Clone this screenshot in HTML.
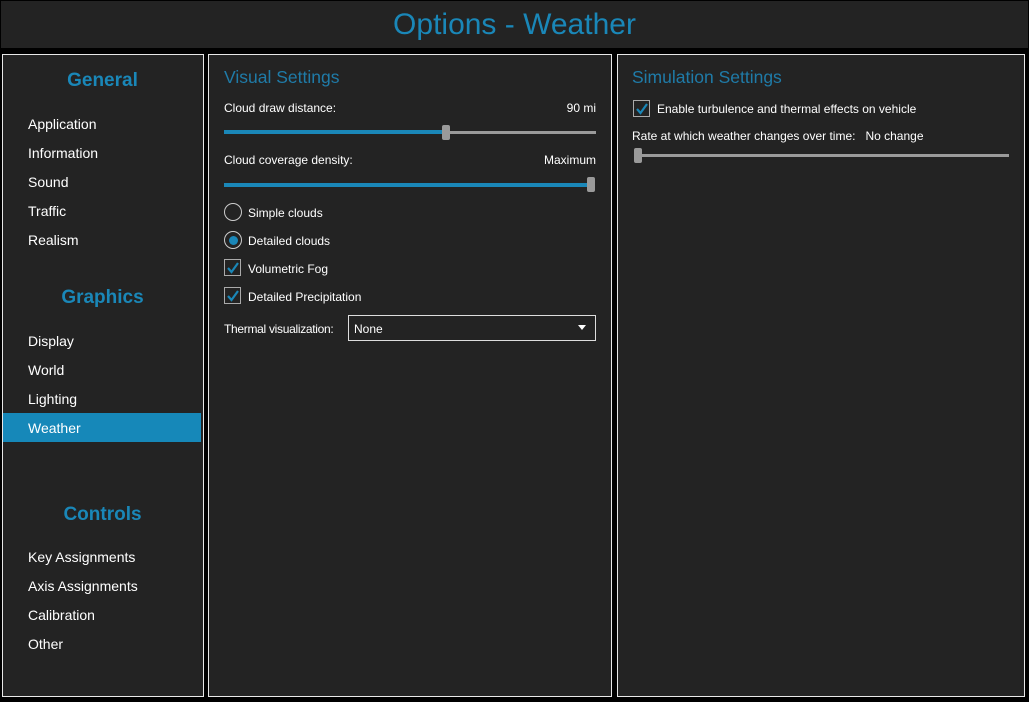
<!DOCTYPE html>
<html><head><meta charset="utf-8"><style>
*{margin:0;padding:0;box-sizing:border-box}
body{width:1029px;height:702px;background:#000;position:relative;overflow:hidden;font-family:"Segoe UI","Liberation Sans",sans-serif;color:#fff}
.a{position:absolute}
.top{left:0;top:0;width:1029px;height:49px;background:#232323;border:1px solid #000}
.title{left:0;top:8px;width:1029px;text-align:center;font-size:30px;color:#1a87b8}
.p{background:#232323;border:1px solid #e8e8e8}
.h{font-size:19px;font-weight:bold;color:#1a87b8;text-align:center;width:201px;left:2px}
.it{left:28px;font-size:14px}
.sh{font-size:17.5px;color:#1f7ba8}
.t{font-size:12px}
.track{height:3px;background:#9a9a9a}
.fill{height:4px;background:#1a87b8}
.thumb{width:8px;height:15px;background:#9a9a9a;border-radius:2px}
.cb{width:17px;height:17px;border:1px solid #aaa}
.rb{width:18px;height:18px;border:1.5px solid #ccc;border-radius:50%}
</style></head><body>
<div class="a top"></div>
<div class="a title">Options - Weather</div>

<div class="a p" style="left:2px;top:54px;width:202px;height:643px"></div>
<div class="a h" style="top:70px">General</div>
<div class="a it" style="top:116px">Application</div>
<div class="a it" style="top:145px">Information</div>
<div class="a it" style="top:174px">Sound</div>
<div class="a it" style="top:203px">Traffic</div>
<div class="a it" style="top:232px">Realism</div>
<div class="a h" style="top:287px">Graphics</div>
<div class="a it" style="top:333px">Display</div>
<div class="a it" style="top:362px">World</div>
<div class="a it" style="top:391px">Lighting</div>
<div class="a" style="left:3px;top:413px;width:198px;height:29px;background:#1688b9"></div>
<div class="a it" style="top:420px">Weather</div>
<div class="a h" style="top:504px">Controls</div>
<div class="a it" style="top:549px">Key Assignments</div>
<div class="a it" style="top:578px">Axis Assignments</div>
<div class="a it" style="top:607px">Calibration</div>
<div class="a it" style="top:636px">Other</div>

<div class="a p" style="left:208px;top:54px;width:404px;height:643px"></div>
<div class="a sh" style="left:224px;top:67px">Visual Settings</div>
<div class="a t" style="left:224px;top:101px">Cloud draw distance:</div>
<div class="a t" style="left:540px;top:101px;width:56px;text-align:right">90 mi</div>
<div class="a track" style="left:224px;top:131px;width:372px"></div>
<div class="a fill" style="left:224px;top:130px;width:222px"></div>
<div class="a thumb" style="left:442px;top:125px"></div>
<div class="a t" style="left:224px;top:153px">Cloud coverage density:</div>
<div class="a t" style="left:500px;top:153px;width:96px;text-align:right">Maximum</div>
<div class="a fill" style="left:224px;top:183px;width:366px"></div>
<div class="a thumb" style="left:587px;top:177px"></div>
<div class="a rb" style="left:224px;top:203px"></div>
<div class="a t" style="left:248px;top:206px">Simple clouds</div>
<div class="a rb" style="left:224px;top:231px"></div>
<div class="a" style="left:228.5px;top:235.5px;width:9px;height:9px;border-radius:50%;background:#1a87b8"></div>
<div class="a t" style="left:248px;top:234px">Detailed clouds</div>
<div class="a cb" style="left:224px;top:259px"></div>
<svg class="a" style="left:224px;top:259px" width="18" height="18"><path d="M4 9 L7.5 13 L14 4" stroke="#1a87b8" stroke-width="2.2" fill="none"/></svg>
<div class="a t" style="left:248px;top:262px">Volumetric Fog</div>
<div class="a cb" style="left:224px;top:287px"></div>
<svg class="a" style="left:224px;top:287px" width="18" height="18"><path d="M4 9 L7.5 13 L14 4" stroke="#1a87b8" stroke-width="2.2" fill="none"/></svg>
<div class="a t" style="left:248px;top:290px">Detailed Precipitation</div>
<div class="a t" style="left:224px;top:322px;letter-spacing:-0.3px">Thermal visualization:</div>
<div class="a" style="left:348px;top:315px;width:248px;height:26px;border:1px solid #ddd"></div>
<div class="a t" style="left:354px;top:322px">None</div>
<svg class="a" style="left:578px;top:325px" width="8" height="5"><path d="M0 0 L8 0 L4 5Z" fill="#fff"/></svg>

<div class="a p" style="left:617px;top:54px;width:408px;height:643px"></div>
<div class="a sh" style="left:632px;top:67px">Simulation Settings</div>
<div class="a cb" style="left:633px;top:100px"></div>
<svg class="a" style="left:633px;top:100px" width="18" height="18"><path d="M4 9 L7.5 13 L14 4" stroke="#1a87b8" stroke-width="2.2" fill="none"/></svg>
<div class="a t" style="left:657px;top:102px">Enable turbulence and thermal effects on vehicle</div>
<div class="a t" style="left:632px;top:129px">Rate at which weather changes over time:&nbsp;&nbsp; No change</div>
<div class="a track" style="left:636px;top:154px;width:373px"></div>
<div class="a thumb" style="left:634px;top:148px"></div>
</body></html>
